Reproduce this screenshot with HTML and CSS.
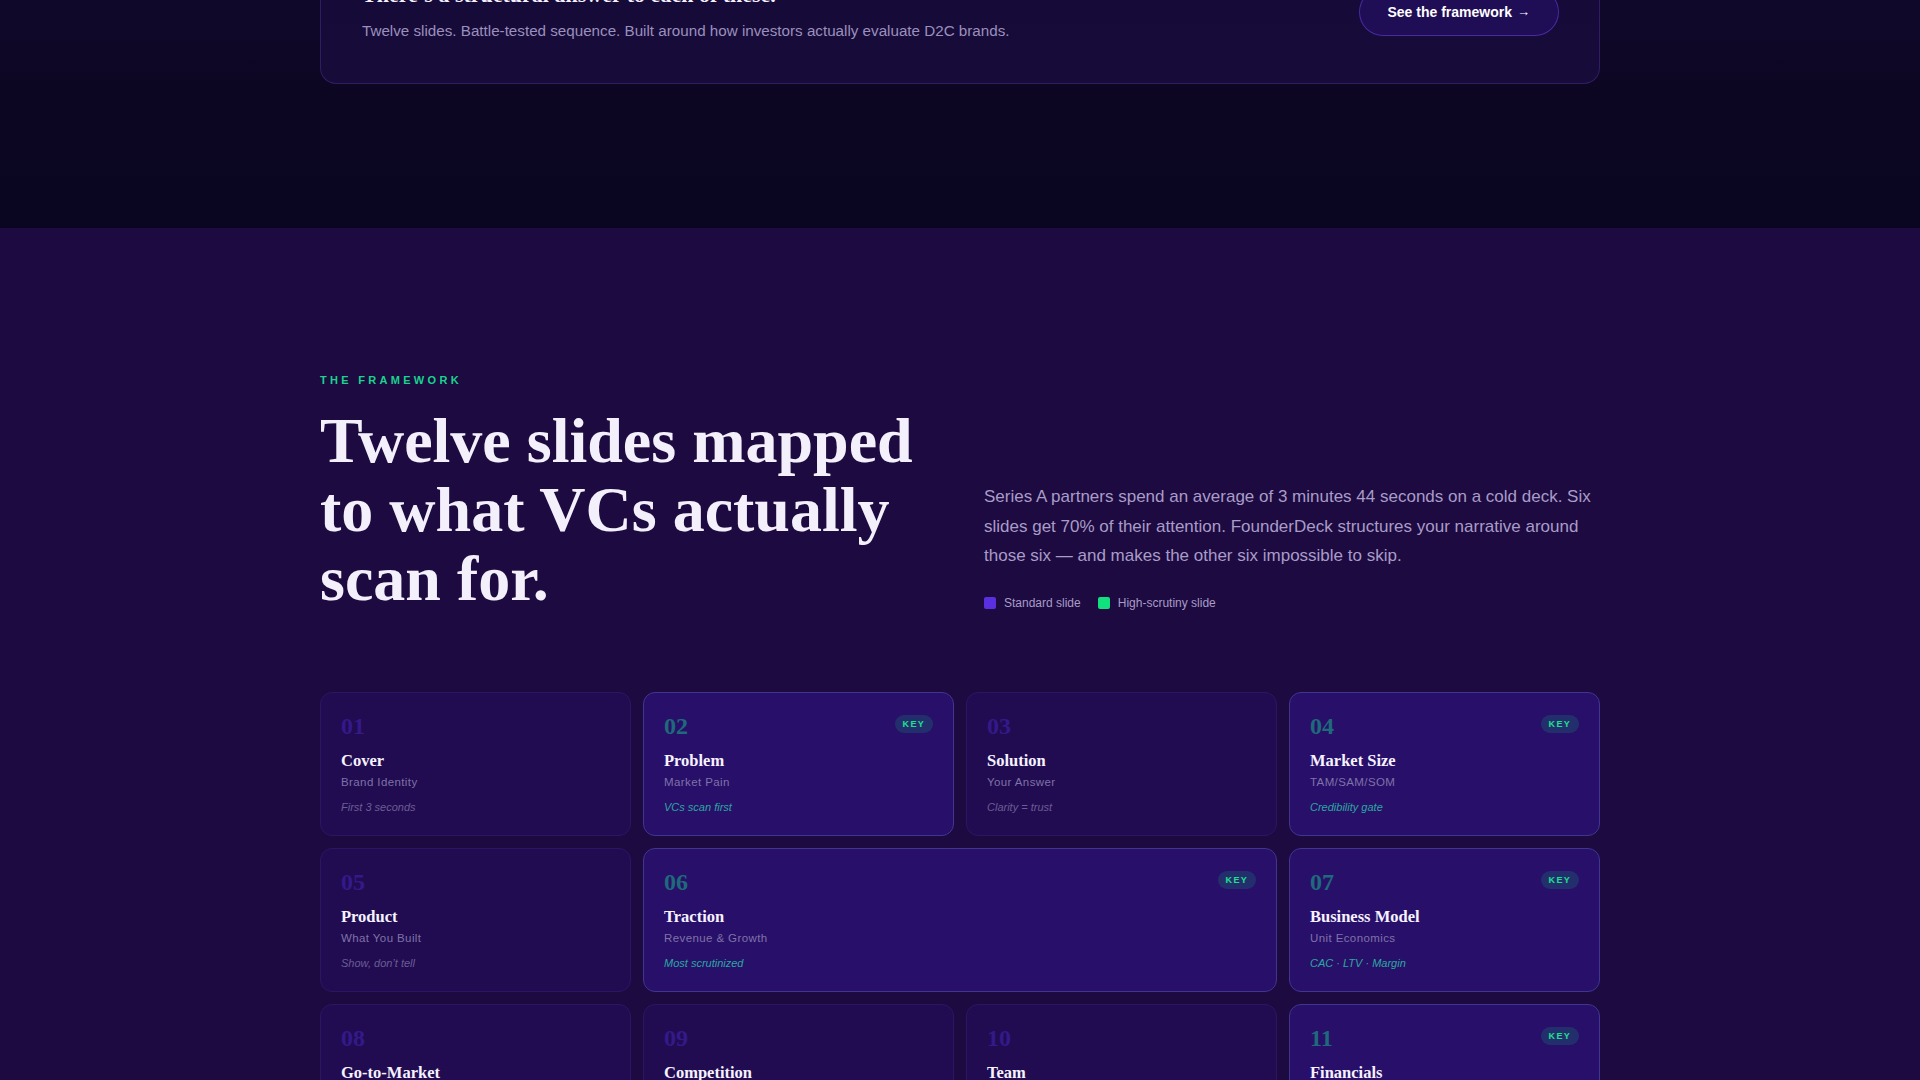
FILE: index.html
```html
<!DOCTYPE html>
<html lang="en">
<head>
<meta charset="utf-8">
<title>FounderDeck — The Framework</title>
<link rel="stylesheet" href="styles.css">
</head>
<body>
<section class="intro">
  <div class="container">
    <div class="cta-card">
      <div class="cta-text">
        <h3 class="cta-title">There’s a structural answer to each of these.</h3>
        <p class="cta-sub">Twelve slides. Battle-tested sequence. Built around how investors actually evaluate D2C brands.</p>
      </div>
      <a class="cta-btn" href="#framework">See the framework <span class="arrow">→</span></a>
    </div>
  </div>
</section>

<section class="framework" id="framework">
  <div class="container">
    <div class="fw-header">
      <div class="fw-left">
        <div class="eyebrow">THE FRAMEWORK</div>
        <h2 class="fw-title">Twelve slides mapped to what VCs actually scan for.</h2>
      </div>
      <div class="fw-right">
        <p class="fw-desc">Series A partners spend an average of 3 minutes 44 seconds on a cold deck. Six slides get 70% of their attention. FounderDeck structures your narrative around those six — and makes the other six impossible to skip.</p>
        <div class="legend">
          <span class="legend-item"><span class="swatch swatch-std"></span>Standard slide</span>
          <span class="legend-item"><span class="swatch swatch-key"></span>High-scrutiny slide</span>
        </div>
      </div>
    </div>

    <div class="slides">
      <div class="slide">
        <div class="slide-top"><span class="num">01</span></div>
        <div class="slide-name">Cover</div>
        <div class="slide-sub">Brand Identity</div>
        <div class="slide-note">First 3 seconds</div>
      </div>
      <div class="slide key">
        <div class="slide-top"><span class="num">02</span><span class="badge">KEY</span></div>
        <div class="slide-name">Problem</div>
        <div class="slide-sub">Market Pain</div>
        <div class="slide-note">VCs scan first</div>
      </div>
      <div class="slide">
        <div class="slide-top"><span class="num">03</span></div>
        <div class="slide-name">Solution</div>
        <div class="slide-sub">Your Answer</div>
        <div class="slide-note">Clarity = trust</div>
      </div>
      <div class="slide key">
        <div class="slide-top"><span class="num">04</span><span class="badge">KEY</span></div>
        <div class="slide-name">Market Size</div>
        <div class="slide-sub">TAM/SAM/SOM</div>
        <div class="slide-note">Credibility gate</div>
      </div>

      <div class="slide">
        <div class="slide-top"><span class="num">05</span></div>
        <div class="slide-name">Product</div>
        <div class="slide-sub">What You Built</div>
        <div class="slide-note">Show, don’t tell</div>
      </div>
      <div class="slide key wide">
        <div class="slide-top"><span class="num">06</span><span class="badge">KEY</span></div>
        <div class="slide-name">Traction</div>
        <div class="slide-sub">Revenue &amp; Growth</div>
        <div class="slide-note">Most scrutinized</div>
      </div>
      <div class="slide key">
        <div class="slide-top"><span class="num">07</span><span class="badge">KEY</span></div>
        <div class="slide-name">Business Model</div>
        <div class="slide-sub">Unit Economics</div>
        <div class="slide-note">CAC · LTV · Margin</div>
      </div>

      <div class="slide">
        <div class="slide-top"><span class="num">08</span></div>
        <div class="slide-name">Go-to-Market</div>
        <div class="slide-sub">Channel Strategy</div>
        <div class="slide-note">How you scale</div>
      </div>
      <div class="slide">
        <div class="slide-top"><span class="num">09</span></div>
        <div class="slide-name">Competition</div>
        <div class="slide-sub">Market Position</div>
        <div class="slide-note">Why you win</div>
      </div>
      <div class="slide">
        <div class="slide-top"><span class="num">10</span></div>
        <div class="slide-name">Team</div>
        <div class="slide-sub">Founders &amp; Advisors</div>
        <div class="slide-note">Bet on people</div>
      </div>
      <div class="slide key">
        <div class="slide-top"><span class="num">11</span><span class="badge">KEY</span></div>
        <div class="slide-name">Financials</div>
        <div class="slide-sub">Projections</div>
        <div class="slide-note">Path to profit</div>
      </div>

      <div class="slide full">
        <div class="slide-top"><span class="num">12</span></div>
        <div class="slide-name">The Ask</div>
        <div class="slide-sub">Use of Funds</div>
        <div class="slide-note">Clear next step</div>
      </div>
    </div>
  </div>
</section>
</body>
</html>
```

FILE: styles.css
```css
* {
  box-sizing: border-box;
}

html, body {
  margin: 0;
  padding: 0;
}

body {
  font-family: "Liberation Sans", Arial, sans-serif;
  background: #1c0a40;
  color: #f4f0ff;
}

.container {
  width: 1280px;
  margin: 0 auto;
}

/* ---------- intro band ---------- */
.intro {
  background: linear-gradient(180deg, #130a30 0%, #0c0622 55%, #0a0520 100%);
  padding-bottom: 144px;
}

.cta-card {
  margin-top: -60px;
  display: flex;
  align-items: center;
  justify-content: space-between;
  padding: 40px 40px 40px 41px;
  border-radius: 16px;
  border: 1px solid rgba(110, 80, 210, 0.28);
  background: linear-gradient(180deg, #150a36 0%, #170b3a 100%);
}

.cta-title {
  margin: 0 0 10px 0;
  font-family: "Liberation Serif", "Times New Roman", serif;
  font-weight: 700;
  font-size: 22px;
  line-height: 28px;
  color: #f4f0ff;
}

.cta-sub {
  margin: 0;
  font-size: 15.2px;
  line-height: 24px;
  color: #9b90bd;
}

.cta-btn {
  display: inline-flex;
  align-items: center;
  gap: 5px;
  padding: 14px 28px;
  border-radius: 999px;
  background: #1f0d55;
  border: 1px solid rgba(124, 77, 255, 0.45);
  color: #ffffff;
  font-weight: 700;
  font-size: 14px;
  line-height: 18px;
  text-decoration: none;
}

.cta-btn .arrow {
  font-weight: 400;
  font-size: 13px;
}

/* ---------- framework ---------- */
.framework {
  background: #1c0a40;
  padding: 144px 0 60px 0;
}

.fw-header {
  display: grid;
  grid-template-columns: 616px 616px;
  column-gap: 48px;
  align-items: end;
  margin-bottom: 79px;
}

.eyebrow {
  font-size: 11px;
  line-height: 16px;
  font-weight: 700;
  letter-spacing: 3.3px;
  color: #19d38e;
  margin-bottom: 18px;
}

.fw-title {
  margin: 0;
  font-family: "Liberation Serif", "Times New Roman", serif;
  font-weight: 700;
  font-size: 64px;
  line-height: 69px;
  color: #f3f0fb;
}

.fw-right {
  padding-bottom: 2px;
}

.fw-desc {
  margin: 0 0 24px 0;
  font-size: 17px;
  line-height: 29.7px;
  color: #a99cc8;
}

.legend {
  display: flex;
  gap: 17px;
  font-size: 12px;
  line-height: 16px;
  color: #a99cc8;
}

.legend-item {
  display: inline-flex;
  align-items: center;
  gap: 8px;
}

.swatch {
  width: 12px;
  height: 12px;
  border-radius: 2px;
}

.swatch-std {
  background: #5a2fe0;
}

.swatch-key {
  background: #12e07e;
}

/* ---------- slide grid ---------- */
.slides {
  display: grid;
  grid-template-columns: repeat(4, 1fr);
  gap: 12px;
}

.slide {
  padding: 20px 20px 20px 20px;
  border-radius: 12px;
  background: #210c51;
  border: 1px solid #2c1663;
}

.slide.key {
  background: #28106a;
  border-color: #3f3690;
}

.slide.wide {
  grid-column: span 2;
}

.slide.full {
  grid-column: span 4;
}

.slide-top {
  display: flex;
  align-items: flex-start;
  justify-content: space-between;
  height: 26px;
}

.num {
  font-family: "Liberation Serif", "Times New Roman", serif;
  font-weight: 700;
  font-size: 24px;
  line-height: 26px;
  color: #33198a;
}

.slide.key .num {
  color: #1f6a7a;
}

.badge {
  display: inline-block;
  margin-top: 2px;
  padding: 0 8px;
  height: 18px;
  line-height: 18px;
  border-radius: 999px;
  background: #232f6c;
  color: #1ee08f;
  font-size: 9px;
  font-weight: 700;
  letter-spacing: 1.3px;
}

.slide-name {
  margin-top: 11px;
  font-family: "Liberation Serif", "Times New Roman", serif;
  font-weight: 700;
  font-size: 16.5px;
  line-height: 22px;
  color: #f6f2ff;
}

.slide-sub {
  margin-top: 2px;
  font-size: 11.5px;
  line-height: 16px;
  letter-spacing: 0.4px;
  color: #7f72a8;
}

.slide-note {
  margin-top: 9px;
  font-size: 11px;
  line-height: 16px;
  font-style: italic;
  color: #6b5d95;
}

.slide.key .slide-note {
  color: #2aa8a0;
}
```
